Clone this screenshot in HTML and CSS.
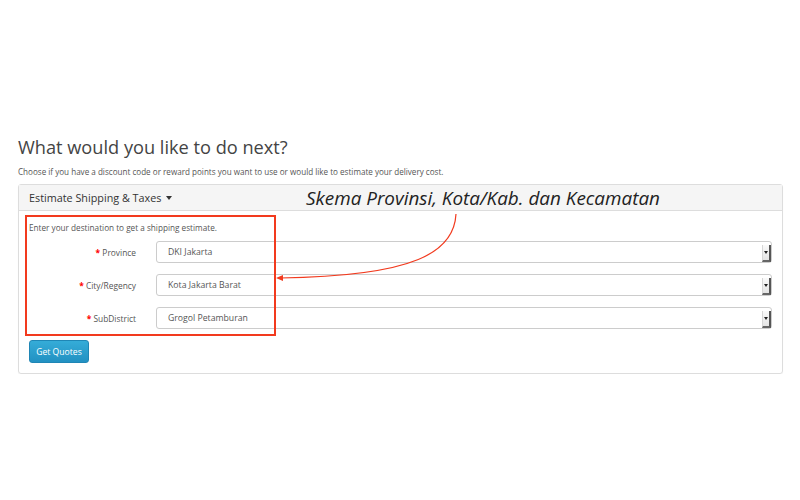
FILE: index.html
```html
<!DOCTYPE html>
<html lang="en">
<head>
<meta charset="utf-8">
<title>Shopping Cart</title>
<link rel="stylesheet" href="styles.css">
</head>
<body>
<div class="page">
  <h2 class="title">What would you like to do next?</h2>
  <p class="lead">Choose if you have a discount code or reward points you want to use or would like to estimate your delivery cost.</p>

  <div class="panel">
    <div class="panel-heading">Estimate Shipping &amp; Taxes <span class="caret"></span></div>
    <div class="panel-body">
      <p class="hint">Enter your destination to get a shipping estimate.</p>
      <div class="form-row">
        <label class="label"><span class="req">*</span> Province</label>
        <div class="select"><span class="value">DKI Jakarta</span><span class="drop"></span></div>
      </div>
      <div class="form-row">
        <label class="label"><span class="req">*</span> City/Regency</label>
        <div class="select"><span class="value">Kota Jakarta Barat</span><span class="drop"></span></div>
      </div>
      <div class="form-row">
        <label class="label"><span class="req">*</span> SubDistrict</label>
        <div class="select"><span class="value">Grogol Petamburan</span><span class="drop"></span></div>
      </div>
      <button class="btn" type="button">Get Quotes</button>
    </div>

    <!-- callout drawn over the form -->
    <div class="callout-box"></div>
    <div class="callout-text">Skema Provinsi, Kota/Kab. dan Kecamatan</div>
    <svg class="callout-arrow" width="200" height="80" viewBox="0 0 200 80">
      <path d="M180 2 C178 40 140 64 4 66" fill="none" stroke="#f23a1e" stroke-width="1.2"/>
      <path d="M0 66 L7 63 L7 69 Z" fill="#f23a1e"/>
    </svg>
  </div>
</div>
</body>
</html>
```

FILE: styles.css
```css
* { box-sizing: border-box; }

body {
  margin: 0;
  background: #fff;
  font-family: "Open Sans", "Liberation Sans", sans-serif;
  color: #555;
}

.page {
  width: 800px;
  padding: 133px 17px 0 18px;
}

.title {
  margin: 0;
  font-size: 18.2px;
  font-weight: 400;
  color: #444;
  line-height: 28px;
}

.lead {
  margin: 4px 0 0;
  font-size: 8.1px;
  line-height: 14px;
  color: #555;
}

.panel {
  position: relative;
  margin-top: 5px;
  border: 1px solid #ddd;
  border-radius: 3px;
  box-shadow: 0 1px 1px rgba(0, 0, 0, 0.05);
}

.panel-heading {
  height: 26px;
  padding: 0 10px;
  background: #f5f5f5;
  border-bottom: 1px solid #ddd;
  font-size: 10.8px;
  line-height: 26px;
  color: #333;
}

.caret {
  display: inline-block;
  width: 0;
  height: 0;
  margin-left: 2px;
  vertical-align: 2px;
  border-top: 4px solid #333;
  border-left: 3.5px solid transparent;
  border-right: 3.5px solid transparent;
}

.panel-body {
  padding: 10px;
}

.hint {
  margin: 0 0 7px;
  font-size: 8.2px;
  line-height: 13px;
  color: #555;
}

.form-row {
  display: flex;
  align-items: center;
  margin-bottom: 11px;
}

.label {
  width: 107px;
  text-align: right;
  font-size: 8.4px;
  color: #555;
}

.req {
  color: #f00;
  font-weight: 700;
}

.select {
  display: flex;
  align-items: stretch;
  justify-content: space-between;
  width: 616px;
  height: 22px;
  margin-left: 20px;
  border: 1px solid #ccc;
  border-radius: 3px;
  background: #fff;
}

.value {
  padding-left: 11px;
  font-size: 8.7px;
  line-height: 20px;
  color: #555;
}

.drop {
  position: relative;
  width: 9px;
  margin: 3px 0 0;
  background: linear-gradient(#fafafa, #e4e4e4);
  border-left: 1px solid #d6d6d6;
  border-right: 2px solid #555;
  border-bottom: 2px solid #666;
}

.drop::after {
  content: "";
  position: absolute;
  left: 1px;
  top: 6px;
  border-top: 3px solid #222;
  border-left: 2.5px solid transparent;
  border-right: 2.5px solid transparent;
}

.btn {
  display: block;
  width: 60px;
  height: 23px;
  padding: 0;
  border: 1px solid #1f86b5;
  border-radius: 3px;
  background: linear-gradient(#35acd8, #2291c2);
  color: #fff;
  font-family: "Open Sans", "Liberation Sans", sans-serif;
  font-size: 8.6px;
}

.callout-box {
  position: absolute;
  left: 6px;
  top: 30px;
  width: 251px;
  height: 121px;
  border: 2px solid #f23a1e;
}

.callout-text {
  position: absolute;
  left: 287px;
  top: 0;
  line-height: 26px;
  font-size: 18.9px;
  font-style: italic;
  color: #222;
}

.callout-arrow {
  position: absolute;
  left: 257px;
  top: 27px;
}
```
